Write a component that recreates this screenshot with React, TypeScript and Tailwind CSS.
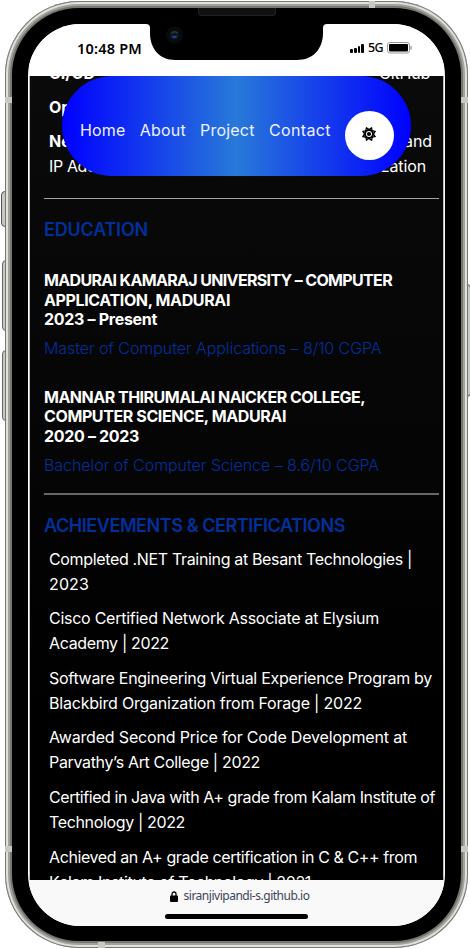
import { useLayoutEffect, useRef, useState } from "react";

type FitProps = { text: string; width: number; className?: string };

// One line of text whose tracking is adjusted to fill a given measure.
function Fit({ text, width, className = "" }: FitProps) {
  const ref = useRef<HTMLSpanElement>(null);
  const [tracking, setTracking] = useState(0);
  useLayoutEffect(() => {
    const el = ref.current;
    if (el) setTracking((width - el.getBoundingClientRect().width) / text.length);
  }, [text, width]);
  return (
    <span className={`block w-max whitespace-nowrap ${className}`}>
      <span ref={ref} style={{ letterSpacing: tracking }}>{text}</span>
    </span>
  );
}

const education = [
  {
    lines: [["MADURAI KAMARAJ UNIVERSITY – COMPUTER", 348], ["APPLICATION, MADURAI", 186], ["2023 – Present", 113]],
    degree: ["Master of Computer Applications – 8/10 CGPA", 337.5],
  },
  {
    lines: [["MANNAR THIRUMALAI NAICKER COLLEGE,", 321], ["COMPUTER SCIENCE, MADURAI", 242], ["2020 – 2023", 95]],
    degree: ["Bachelor of Computer Science – 8.6/10 CGPA", 335],
  },
] as { lines: [string, number][]; degree: [string, number] }[];

const achievements: [string, number][][] = [
  [["Completed .NET Training at Besant Technologies |", 363], ["2023", 40]],
  [["Cisco Certified Network Associate at Elysium", 330], ["Academy | 2022", 120]],
  [["Software Engineering Virtual Experience Program by", 383], ["Blackbird Organization from Forage | 2022", 313]],
  [["Awarded Second Price for Code Development at", 358], ["Parvathy’s Art College | 2022", 211]],
  [["Certified in Java with A+ grade from Kalam Institute of", 386], ["Technology | 2022", 136]],
  [["Achieved an A+ grade certification in C & C++ from", 368], ["Kalam Institute of Technology | 2021", 262]],
];

const nav: [string, number][] = [["Home", 45.5], ["About", 46], ["Project", 54.5], ["Contact", 62]];

function StatusBar() {
  return (
    <div className="relative flex h-[52px] justify-between bg-white pt-4 pr-[32px] pl-12">
      <Fit text="10:48 PM" width={65} className="font-['Noto_Sans'] text-[14.5px] leading-[17px] font-semibold text-black" />
      <div className="flex h-4 items-center gap-1 font-['Noto_Sans'] text-[12.5px] leading-4 font-medium text-black">
        <div className="flex h-[9px] items-end gap-[1px]">
          <i className="h-1 w-[2.7px] rounded-[1px] bg-black" />
          <i className="h-[5px] w-[2.7px] rounded-[1px] bg-black" />
          <i className="h-[7px] w-[2.7px] rounded-[1px] bg-black" />
          <i className="h-[9px] w-[2.7px] rounded-[1px] bg-black" />
        </div>
        <Fit text="5G" width={15} />
        <svg width="25" height="12" viewBox="0 0 25 12">
          <rect x=".5" y=".5" width="22" height="10.5" rx="2.5" fill="white" stroke="#999" />
          <rect x="2" y="2" width="19" height="7.5" rx="1" fill="black" />
          <path d="M24 4v3.5" stroke="#777" />
        </svg>
      </div>
      <div className="absolute top-0 left-[121px] h-9 w-[174px]">
        <svg width="182" height="37" viewBox="-4 0 182 37" className="absolute top-0 -left-1">
          <path d="M-4-1H177V0Q173 0 173 4V9C173 25 163 36 147 36H25C10 36 0 25 0 9V4Q0 0-4 0Z" fill="black" />
          <circle cx="24.5" cy="11" r="8.5" fill="#090a0b" />
          <circle cx="24.5" cy="11" r="4.8" fill="#10161d" />
          <path d="M21.5 9.2q3-3 6 0" stroke="#17463f" strokeWidth="1.5" fill="none" />
          <path d="M21.5 12q3 4.5 6 0Z" fill="#263c9b" />
        </svg>
      </div>
    </div>
  );
}

function NavBar() {
  return (
    <nav className="absolute top-0 left-8 flex h-[100px] w-[349px] items-start rounded-[50px] bg-[linear-gradient(90deg,#0000ff,#2879d9_50%,#0000ff)] pt-[35px] pl-[18px] text-[16px] leading-[38px] text-[#eef1ff]">
      <div className="flex gap-[14.3px]">
        {nav.map(([t, w]) => <Fit key={t} text={t} width={w} />)}
      </div>
      <button className="ml-[14px] flex size-[49px] shrink-0 items-center justify-center rounded-full bg-white pb-[3px]">
        <svg width="14" height="14" viewBox="0 0 14 14" fill="none" stroke="black">
          <circle cx="7" cy="7" r="4" strokeWidth="2" />
          <circle cx="7" cy="7" r="2.1" fill="black" stroke="none" />
          <path
            d="M5.5 2.8 7 .4 8.5 2.8 11.7 2.3 11.2 5.5 13.6 7 11.2 8.5 11.7 11.7 8.5 11.2 7 13.6 5.5 11.2 2.3 11.7 2.8 8.5 .4 7 2.8 5.5 2.3 2.3Z"
            strokeWidth="1.3"
            transform="rotate(22.5 7 7)"
          />
        </svg>
      </button>
    </nav>
  );
}

function Page() {
  return (
    <main className="relative h-[804px] overflow-hidden border-x border-[#bbb] bg-linear-to-b from-[#0a0a0a] via-[#050505] to-black pr-1 pl-[14px] text-white">
      <div className="-mt-[15px] px-[5px] text-[16px] leading-[25px]">
        <div className="flex justify-between pr-1"><b className="font-bold">CI/CD</b><Fit text="GitHub" width={51} /></div>
        <b className="mt-[9px] block font-bold">Operating</b>
        <div className="mt-[9px] flex justify-between pr-[2px]"><b className="font-bold">Networking</b><Fit text="and" width={28} /></div>
        <div className="flex justify-between pr-[8px]"><Fit text="IP Address" width={78} /><Fit text="Virtualization" width={97} /></div>
      </div>
      <hr className="mt-[19px] border-[#a5a5a5]" />
      <h2 className="mt-[19px] text-[18px] leading-6 font-semibold text-[#00309b]"><Fit text="EDUCATION" width={104} /></h2>
      {education.map((e, i) => (
        <section key={e.degree[0]} className={i ? "mt-[27px]" : "mt-[29px]"}>
          <h3 className="text-[16px] leading-[19.6px] font-bold">
            {e.lines.map(([t, w]) => <Fit key={t} text={t} width={w} />)}
          </h3>
          <p className="mt-[6px] pb-px text-[16px] leading-6 font-light text-[#00309f]"><Fit text={e.degree[0]} width={e.degree[1]} /></p>
        </section>
      ))}
      <div className="mt-[15px] h-[2px] bg-[#666]" />
      <h2 className="mt-[19px] text-[18px] leading-6 font-semibold text-[#00309b]"><Fit text="ACHIEVEMENTS & CERTIFICATIONS" width={301} /></h2>
      <ul className="mt-[9px] flex flex-col gap-[9.6px] pl-[5px] text-[16px] leading-[25px]">
        {achievements.map((a) => (
          <li key={a[0][0]}>{a.map(([t, w]) => <Fit key={t} text={t} width={w} />)}</li>
        ))}
      </ul>
      <NavBar />
    </main>
  );
}

function AddressBar() {
  return (
    <footer className="flex h-[46px] flex-col items-center bg-[#f9f9f9] pt-2">
      <div className="flex items-center gap-[6px] pl-[6px] font-['Noto_Sans'] text-[12px] leading-4 text-[#3b4656]">
        <svg width="8" height="11" viewBox="0 0 8 11">
          <path d="M2 5V3a2 2 0 014 0v2" fill="none" stroke="black" strokeWidth="1.3" />
          <rect y="4.5" width="8" height="6.5" rx="1" fill="black" />
        </svg>
        <Fit text="siranjivipandi-s.github.io" width={126} />
      </div>
      <div className="mt-[10px] h-[5px] w-[143px] rounded-full bg-black" />
    </footer>
  );
}

export default function App() {
  return (
    <div className="relative h-[949px] w-[470px] overflow-hidden bg-white pt-px pl-[5px] font-[Inter,sans-serif]">
      <i className="absolute top-[191px] left-px h-9 w-[6px] rounded-l-sm border border-[#555] bg-[#c5c8c3]" />
      <i className="absolute top-[260px] left-[2px] h-[71px] w-[6px] rounded-l-sm border border-[#666] bg-[#c5c8c3]" />
      <i className="absolute top-[350px] left-[2px] h-[71px] w-[6px] rounded-l-sm border border-[#666] bg-[#c5c8c3]" />
      <i className="absolute top-[284px] left-[465px] h-[113px] w-[6px] rounded-r-sm border border-[#555] bg-[#c5c8c3]" />
      <div className="relative h-[947px] w-[463px] rounded-[74px] bg-[#777870] p-[7px] shadow-[inset_0_0_0_1px_#777,inset_0_0_0_3px_#e1e1dc,inset_0_0_0_5px_#a1a29b]">
        <i className="absolute top-[96px] left-0 h-[6px] w-[7px] bg-[#c8c9c5]" />
        <i className="absolute top-[96px] right-0 h-[6px] w-[7px] bg-[#c8c9c5]" />
        <i className="absolute top-[845px] left-0 h-[6px] w-[7px] bg-[#c8c9c5]" />
        <i className="absolute top-[845px] right-0 h-[6px] w-[7px] bg-[#c8c9c5]" />
        <i className="absolute top-0 left-[364px] h-[7px] w-[6px] bg-[#c8c9c5]" />
        <i className="absolute bottom-0 left-[93px] h-[6px] w-[7px] bg-[#c8c9c5]" />
        <div className="relative h-[933px] w-[449px] rounded-[67px] bg-black pt-4 pl-4">
          <i className="absolute top-0 left-[186px] h-2 w-[78px] rounded-b-[4px] border border-t-0 border-[#222] bg-[#101010]" />
          <div className="h-[902px] w-[417px] overflow-hidden rounded-[52px] bg-white px-px">
            <StatusBar />
            <Page />
            <AddressBar />
          </div>
        </div>
      </div>
    </div>
  );
}
